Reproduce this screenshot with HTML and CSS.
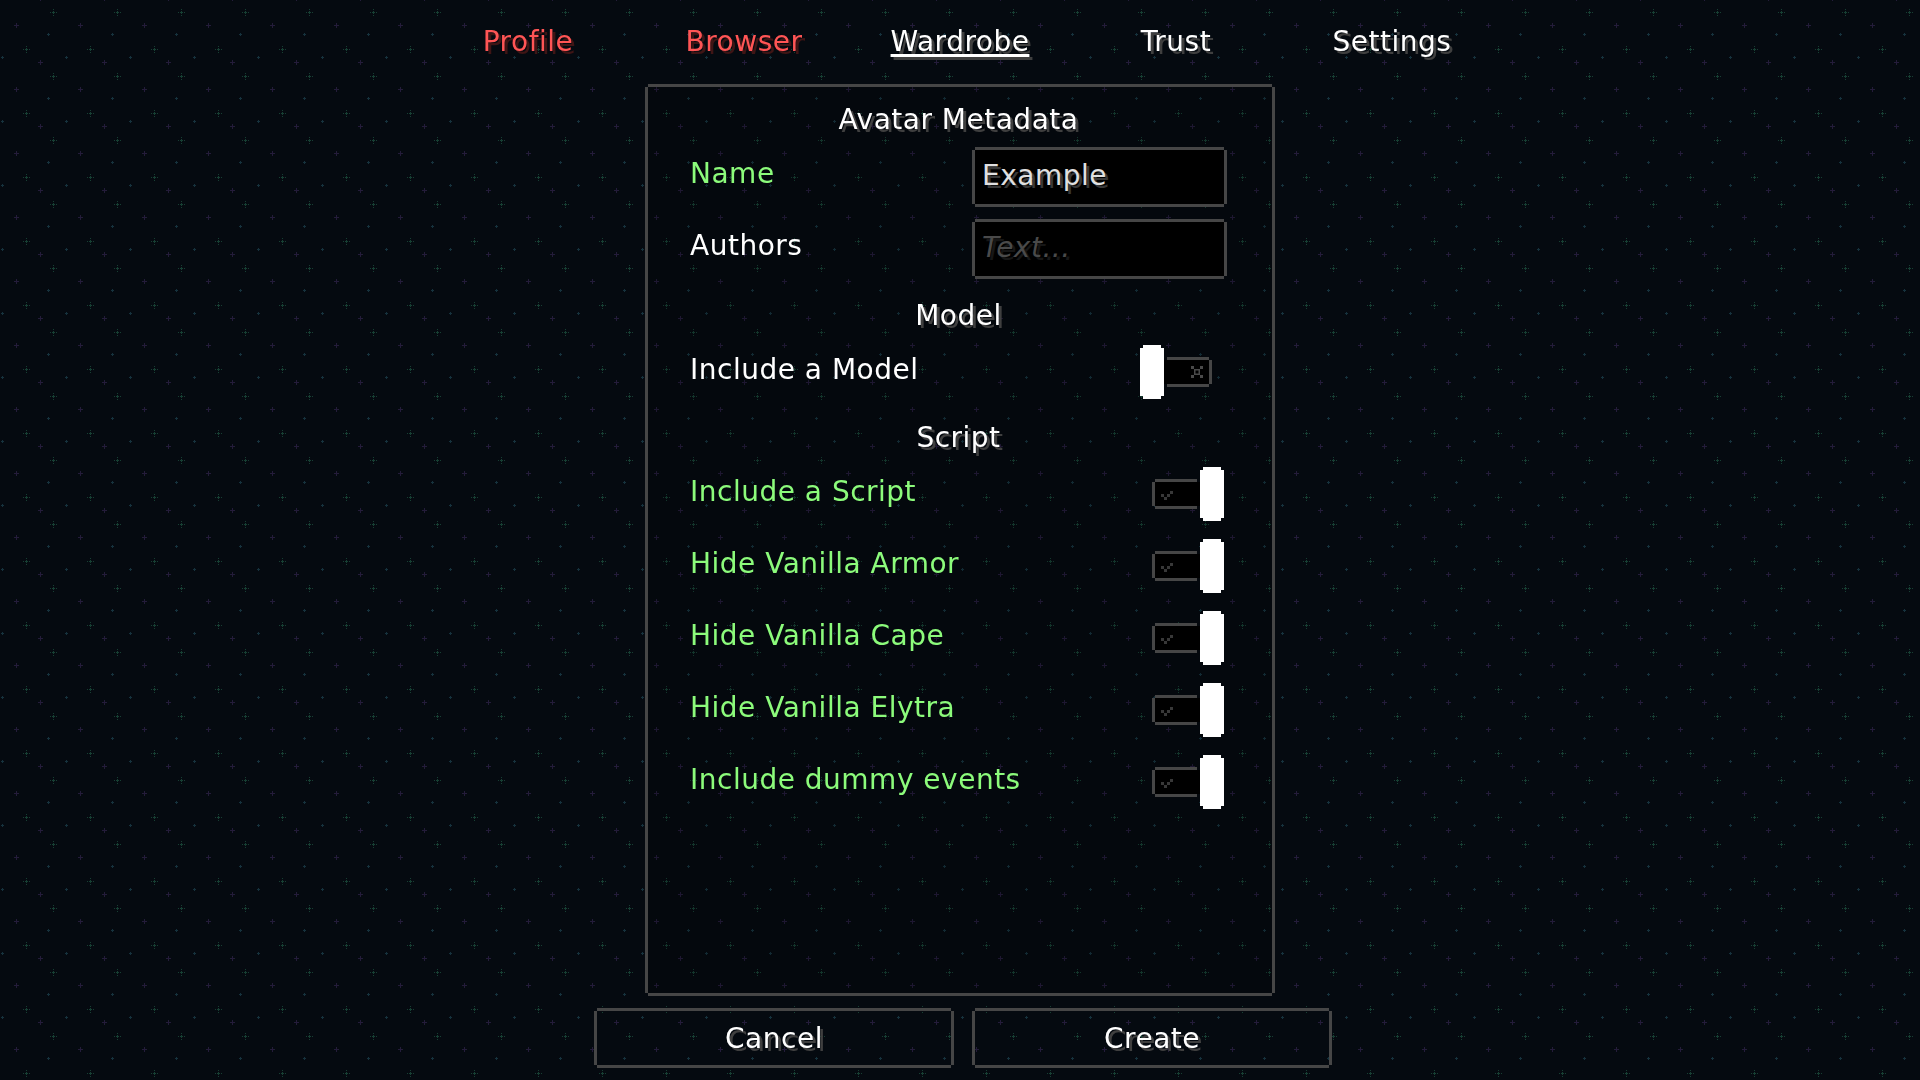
FILE: index.html
```html
<!DOCTYPE html>
<html lang="en">
<head>
<meta charset="utf-8">
<title>Wardrobe - Avatar Metadata</title>
<link rel="stylesheet" href="styles.css">
</head>
<body>
<svg class="bg" width="1920" height="1080" xmlns="http://www.w3.org/2000/svg" aria-hidden="true">
  <defs>
    <pattern id="stars" width="64" height="64" patternUnits="userSpaceOnUse">
      <g fill="#173f33">
        <rect x="50" y="12" width="1" height="1"/><rect x="52" y="12" width="3" height="1"/><rect x="56" y="12" width="1" height="1"/>
        <rect x="53" y="9" width="1" height="1"/><rect x="53" y="11" width="1" height="3"/><rect x="53" y="15" width="1" height="1"/>
        <rect x="23" y="49" width="1" height="1"/><rect x="25" y="49" width="3" height="1"/><rect x="29" y="49" width="1" height="1"/>
        <rect x="26" y="46" width="1" height="1"/><rect x="26" y="48" width="1" height="3"/><rect x="26" y="52" width="1" height="1"/>
      </g>
      <g fill="#241c3a">
        <rect x="14" y="25" width="5" height="1"/><rect x="16" y="23" width="1" height="5"/>
        <rect x="38" y="62" width="5" height="1"/><rect x="40" y="60" width="1" height="5"/>
        <rect x="38" y="-2" width="5" height="1"/><rect x="40" y="-4" width="1" height="5"/>
      </g>
      <g fill="#16323d">
        <rect x="47" y="34" width="3" height="1"/><rect x="48" y="33" width="1" height="3"/>
        <rect x="1" y="57" width="3" height="1"/><rect x="2" y="56" width="1" height="3"/>
      </g>
    </pattern>
  </defs>
  <rect width="1920" height="1080" fill="url(#stars)"/>
</svg>

<nav class="tabs">
  <span class="tab tab-red">Profile</span>
  <span class="tab tab-red">Browser</span>
  <span class="tab tab-active">Wardrobe</span>
  <span class="tab">Trust</span>
  <span class="tab">Settings</span>
</nav>

<main class="panel">
  <h1 class="title">Avatar Metadata</h1>

  <div class="row row-input">
    <span class="label label-green">Name</span>
    <div class="field"><span class="field-value">Example</span></div>
  </div>
  <div class="row row-input row-gap">
    <span class="label">Authors</span>
    <div class="field"><span class="field-placeholder">Text...</span></div>
  </div>

  <h2 class="heading heading-model">Model</h2>
  <div class="row row-toggle row-first">
    <span class="label">Include a Model</span>
    <div class="toggle toggle-off">
      <span class="knob"></span>
      <span class="track"><svg class="mark-x" width="12" height="12" viewBox="0 0 12 12"><path d="M0 0h3v3H0zM9 0h3v3H9zM3 3h6v6H3zM0 9h3v3H0zM9 9h3v3H9z" fill="#4a4a4a"/><path d="M4.5 4.5h3v3h-3z" fill="#000"/></svg></span>
    </div>
  </div>

  <h2 class="heading heading-script">Script</h2>
  <div class="row row-toggle row-first">
    <span class="label label-green">Include a Script</span>
    <div class="toggle toggle-on"><span class="track"><svg class="mark-check" width="12" height="9" viewBox="0 0 12 9"><path d="M0 3h3v3H0zM3 6h3v3H3zM6 3h3v3H6zM9 0h3v3H9z" fill="#383838"/></svg></span><span class="knob"></span></div>
  </div>
  <div class="row row-toggle row-next">
    <span class="label label-green">Hide Vanilla Armor</span>
    <div class="toggle toggle-on"><span class="track"><svg class="mark-check" width="12" height="9" viewBox="0 0 12 9"><path d="M0 3h3v3H0zM3 6h3v3H3zM6 3h3v3H6zM9 0h3v3H9z" fill="#383838"/></svg></span><span class="knob"></span></div>
  </div>
  <div class="row row-toggle row-next">
    <span class="label label-green">Hide Vanilla Cape</span>
    <div class="toggle toggle-on"><span class="track"><svg class="mark-check" width="12" height="9" viewBox="0 0 12 9"><path d="M0 3h3v3H0zM3 6h3v3H3zM6 3h3v3H6zM9 0h3v3H9z" fill="#383838"/></svg></span><span class="knob"></span></div>
  </div>
  <div class="row row-toggle row-next">
    <span class="label label-green">Hide Vanilla Elytra</span>
    <div class="toggle toggle-on"><span class="track"><svg class="mark-check" width="12" height="9" viewBox="0 0 12 9"><path d="M0 3h3v3H0zM3 6h3v3H3zM6 3h3v3H6zM9 0h3v3H9z" fill="#383838"/></svg></span><span class="knob"></span></div>
  </div>
  <div class="row row-toggle row-next">
    <span class="label label-green">Include dummy events</span>
    <div class="toggle toggle-on"><span class="track"><svg class="mark-check" width="12" height="9" viewBox="0 0 12 9"><path d="M0 3h3v3H0zM3 6h3v3H3zM6 3h3v3H6zM9 0h3v3H9z" fill="#383838"/></svg></span><span class="knob"></span></div>
  </div>
</main>

<div class="actions">
  <button class="btn" type="button">Cancel</button>
  <button class="btn" type="button">Create</button>
</div>
</body>
</html>
```

FILE: styles.css
```css
html, body {
  margin: 0;
  padding: 0;
}

body {
  width: 1920px;
  height: 1080px;
  overflow: hidden;
  background: #050a10;
  color: #ffffff;
  font-family: "DejaVu Sans", "Noto Sans", sans-serif;
  font-size: 28px;
  line-height: 28px;
  letter-spacing: 0.5px;
}

.bg {
  position: fixed;
  left: 0;
  top: 0;
  z-index: -1;
  display: block;
}

/* ---------- tabs ---------- */
.tabs {
  height: 84px;
  box-sizing: border-box;
  padding-top: 28px;
  display: flex;
  justify-content: center;
}

.tab {
  width: 216px;
  height: 28px;
  text-align: center;
  color: #ffffff;
  text-shadow: 3px 3px 0 #3f3f3f;
}

.tab-red {
  color: #ff5555;
  text-shadow: 3px 3px 0 #3f1515;
}

.tab-active {
  text-decoration: underline;
  text-decoration-thickness: 3px;
  text-underline-offset: 3px;
}

/* ---------- notched boxes ---------- */
.panel,
.field,
.track,
.knob,
.btn {
  clip-path: polygon(3px 0, calc(100% - 3px) 0, calc(100% - 3px) 3px, 100% 3px,
    100% calc(100% - 3px), calc(100% - 3px) calc(100% - 3px), calc(100% - 3px) 100%,
    3px 100%, 3px calc(100% - 3px), 0 calc(100% - 3px), 0 3px, 3px 3px);
}

/* ---------- panel ---------- */
.panel {
  width: 630px;
  height: 912px;
  box-sizing: border-box;
  margin: 0 auto;
  border: 3px solid #464646;
  background: rgba(0, 0, 0, 0.15);
  padding: 19px 45px 0 42px;
  display: flex;
  flex-direction: column;
}

.title,
.heading {
  margin: 0;
  font-size: 28px;
  font-weight: normal;
  line-height: 28px;
  text-align: center;
  color: #ffffff;
  text-shadow: 3px 3px 0 #3f3f3f;
}

.heading-model { margin-top: 23px; }
.heading-script { margin-top: 25px; }

.row {
  display: flex;
  justify-content: space-between;
  align-items: flex-start;
}

.row-input {
  height: 60px;
  margin-top: 13px;
}

.row-input.row-gap { margin-top: 12px; }

.row-input .label { margin-top: 13px; }

.row-toggle {
  height: 54px;
}

.row-toggle .label { margin-top: 11px; }

.row-first { margin-top: 15px; }
.row-next { margin-top: 18px; }

.label {
  color: #ffffff;
  white-space: nowrap;
}

.label-green {
  color: #8cfb7b;
}

/* ---------- text field ---------- */
.field {
  width: 255px;
  height: 60px;
  box-sizing: border-box;
  border: 3px solid #464646;
  background: #000000;
  padding: 12px 0 0 7px;
}

.field-value {
  color: #e0e0e0;
  text-shadow: 3px 3px 0 #383838;
}

.field-placeholder {
  color: #4a4a4a;
  font-style: italic;
  text-shadow: 3px 3px 0 #161616;
}

/* ---------- toggles ---------- */
.toggle {
  display: flex;
  align-items: center;
  height: 54px;
}

.toggle-on { margin-right: 3px; }
.toggle-off { margin-right: 15px; }

.knob {
  width: 24px;
  height: 54px;
  background: #ffffff;
}

.track {
  width: 48px;
  height: 30px;
  box-sizing: border-box;
  border: 3px solid #464646;
  background: #000000;
  display: flex;
}

.toggle-on .track {
  border-right: none;
  padding: 9px 0 0 6px;
}

.toggle-off .track {
  border-left: none;
  justify-content: flex-end;
  padding: 6px 6px 0 0;
}

.mark-check,
.mark-x {
  display: block;
}

/* ---------- buttons ---------- */
.actions {
  display: flex;
  justify-content: center;
  gap: 18px;
  padding-left: 6px;
  margin-top: 12px;
}

.btn {
  width: 360px;
  height: 60px;
  box-sizing: border-box;
  border: 3px solid #464646;
  background: transparent;
  color: #ffffff;
  font-family: inherit;
  font-size: 28px;
  line-height: 28px;
  letter-spacing: 0.5px;
  text-shadow: 3px 3px 0 #3f3f3f;
  padding: 2px 0 0 0;
}
```
